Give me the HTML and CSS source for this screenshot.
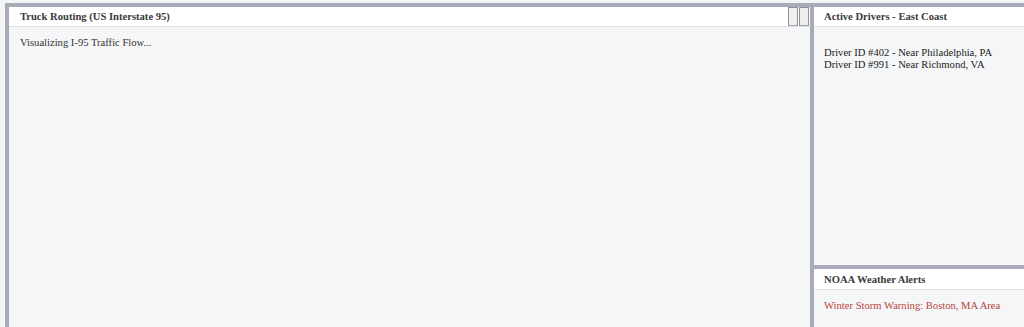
FILE: index.html
```html
<!DOCTYPE html>
<html>
<head>
<meta charset="utf-8">
<link rel="stylesheet" href="styles.css">
</head>
<body>
<div class="frame">
  <section class="panel main">
    <header class="panel-head">
      <span class="title">Truck Routing (US Interstate 95)</span>
      <span class="grip"><i></i><i></i></span>
    </header>
    <div class="panel-body">Visualizing I-95 Traffic Flow...</div>
  </section>
  <div class="side">
    <section class="panel drivers">
      <header class="panel-head"><span class="title">Active Drivers - East Coast</span></header>
      <div class="panel-body list">
        <div>Driver ID #402 - Near Philadelphia, PA</div>
        <div>Driver ID #991 - Near Richmond, VA</div>
      </div>
    </section>
    <section class="panel alerts">
      <header class="panel-head"><span class="title">NOAA Weather Alerts</span></header>
      <div class="panel-body alert">Winter Storm Warning: Boston, MA Area</div>
    </section>
  </div>
</div>
</body>
</html>
```
FILE: styles.css
```css
html, body {
  margin: 0;
  padding: 0;
  height: 327px;
  overflow: hidden;
  background: #f3f4f6;
  font-family: "Liberation Serif", "Times New Roman", serif;
  font-size: 10.6px;
  color: #333;
}
.frame {
  margin: 3px 0 0 5px;
  padding: 4px 0 0 4px;
  background: #a9acb8;
  display: grid;
  grid-template-columns: 801px 1fr;
  gap: 4px;
  height: 340px;
}
.panel {
  background: #f5f6f8;
  display: flex;
  flex-direction: column;
}
.panel-head {
  background: #ffffff;
  border-bottom: 1px solid #dfe1e6;
  height: 19px;
  display: flex;
  align-items: center;
  padding-left: 11px;
}
.title {
  font-weight: bold;
  color: #3a3a3a;
  flex: 1;
}
.grip {
  display: flex;
  align-self: stretch;
  gap: 1px;
  margin-right: 1px;
}
.grip i {
  width: 8px;
  background: #efefef;
  border: 1px solid #8c8f98;
  border-bottom-color: #a0a3ab;
}
.panel-body {
  padding: 10px 11px;
  line-height: 12px;
}
.side {
  display: grid;
  grid-template-rows: 258px 1fr;
  gap: 4px;
}
.drivers .panel-head, .alerts .panel-head { padding-left: 10px; }
.list {
  padding-top: 20px;
  padding-left: 10px;
  color: #1a1a1a;
}
.alerts .panel-head { height: 20px; }
.alert {
  color: #b8453a;
  padding-left: 10px;
}
```
